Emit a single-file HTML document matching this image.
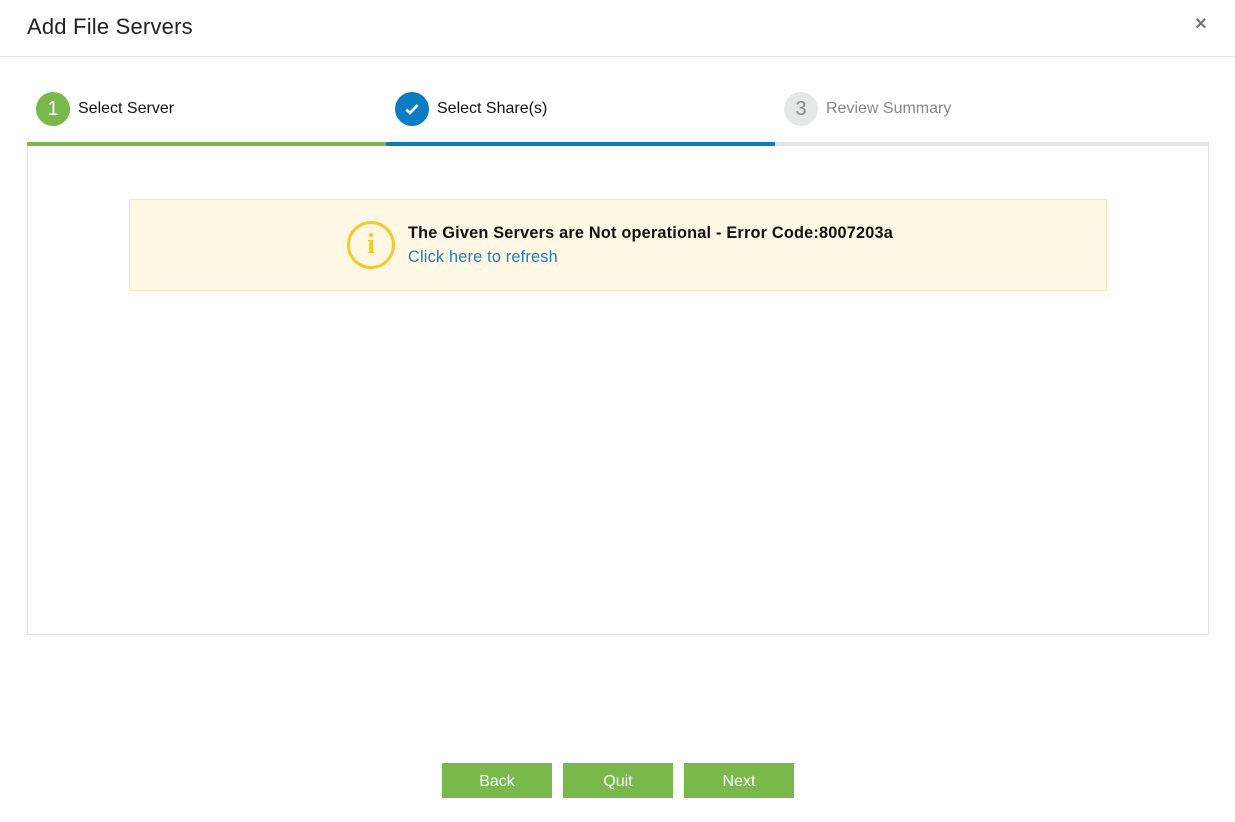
<!DOCTYPE html>
<html><head><meta charset="utf-8"><style>
*{margin:0;padding:0;box-sizing:border-box}
body{width:1235px;height:822px;background:#fff;font-family:"Liberation Sans",sans-serif;position:relative;overflow:hidden;color:#111}
.hdr{position:absolute;left:0;top:0;width:1235px;height:57px;border-bottom:1px solid #e5e5e5}
.hdr h1{position:absolute;left:27px;top:14px;font-size:22px;letter-spacing:0.2px;font-weight:normal;color:#222}
.x{position:absolute;left:1195px;top:13px;font-size:20px;color:#777;font-weight:bold}
.step{position:absolute;top:91px;height:34px;display:flex;align-items:center;font-size:16px;padding-top:2px}
.c{width:34px;height:34px;border-radius:50%;display:flex;align-items:center;justify-content:center;margin-right:8px;color:#fff;font-size:20px}
.bar{position:absolute;top:142px;height:4px}
.panel{position:absolute;left:27px;top:146px;width:1182px;height:489px;border:1px solid #e3e3e3;border-top:none}
.warn{position:absolute;left:129px;top:199px;width:978px;height:92px;background:#fdf7e4;border:1px solid #f6e8bd}
.icon{position:absolute;left:347px;top:221px;width:48px;height:48px;border:3px solid #f5c92a;border-radius:50%;color:#f5c92a;font-family:"Liberation Serif",serif;font-weight:bold;font-size:28px;text-align:center;line-height:42px}
.t1{position:absolute;left:408px;top:224px;font-size:16.3px;letter-spacing:0.2px;font-weight:bold;color:#111}
.t2{position:absolute;left:408px;top:248px;font-size:16.3px;letter-spacing:0.2px;color:#1a7fc4}
.btn{position:absolute;top:763px;width:110px;height:35px;background:#79b94c;color:#fff;font-size:16px;text-align:center;line-height:37px}
</style></head><body>
<div class="hdr"><h1>Add File Servers</h1><div class="x">×</div></div>
<div class="step" style="left:36px"><div class="c" style="background:#79b94c">1</div>Select Server</div>
<div class="step" style="left:395px"><div class="c" style="background:#0a7cc1"><svg width="18" height="18" viewBox="0 0 16 16"><path d="M3 8.5l3.2 3L13 4.5" stroke="#fff" stroke-width="2.4" fill="none"/></svg></div>Select Share(s)</div>
<div class="step" style="left:784px;color:#888"><div class="c" style="background:#e6e8e8;color:#888">3</div>Review Summary</div>
<div class="bar" style="left:27px;width:359px;background:#79b94c"></div>
<div class="bar" style="left:386px;width:389px;background:#0a7cc1"></div>
<div class="bar" style="left:775px;width:434px;background:#e6e6e6"></div>
<div class="panel"></div>
<div class="warn"></div>
<div class="icon">i</div>
<div class="t1">The Given Servers are Not operational - Error Code:8007203a</div>
<div class="t2">Click here to refresh</div>
<div class="btn" style="left:442px">Back</div>
<div class="btn" style="left:563px">Quit</div>
<div class="btn" style="left:684px">Next</div>
</body></html>
